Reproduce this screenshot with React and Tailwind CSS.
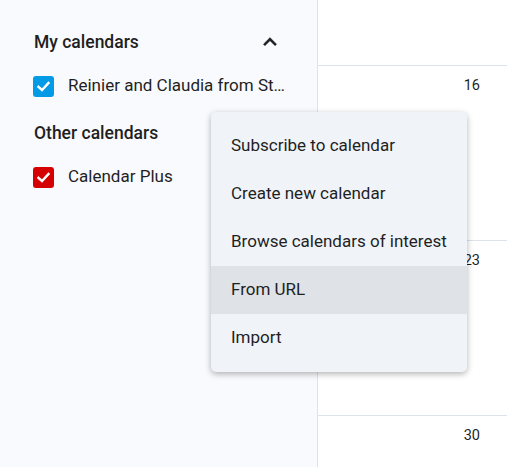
import React from "react";

const font = { fontFamily: "Roboto, 'Noto Sans', Arial, sans-serif" };

function Check({ color }) {
  return (
    <div className={`w-[21px] h-[21px] rounded-[3px] flex items-center justify-center shrink-0 ${color}`}>
      <svg width="15" height="15" viewBox="0 0 15 15">
        <polyline points="2.5,7.8 6,11 12.5,4" fill="none" stroke="white" strokeWidth="2.4" strokeLinecap="square" />
      </svg>
    </div>
  );
}

export default function App() {
  const items = ["Subscribe to calendar", "Create new calendar", "Browse calendars of interest", "From URL", "Import"];
  return (
    <div className="relative flex w-[507px] h-[467px] overflow-hidden bg-white text-[#1f1f1f]" style={font}>
      <div className="w-[318px] shrink-0 h-full bg-[#f8fafd] border-r border-[#dde3ea] pt-[18px] pl-[33px]">
        <div className="h-12 flex items-center justify-between pr-[36px]">
          <span className="ml-px text-[17.5px] font-medium">My calendars</span>
          <svg width="22" height="22" viewBox="0 0 24 24" className="-mt-px">
            <path d="M7.41 15.41L12 10.83l4.59 4.58L18 14l-6-6-6 6z" fill="#1f1f1f" stroke="#1f1f1f" strokeWidth="0.4" transform="translate(12 12) scale(1.2) translate(-12 -12)" />
          </svg>
        </div>
        <div className="h-10 flex items-center gap-[14px]">
          <Check color="bg-[#039be5]" />
          <span className="text-[17px] whitespace-nowrap">Reinier and Claudia from St…</span>
        </div>
        <div className="mt-[3px] h-12 flex items-center">
          <span className="ml-px text-[17.5px] font-medium">Other calendars</span>
        </div>
        <div className="h-10 flex items-center gap-[14px]">
          <Check color="bg-[#d50000]" />
          <span className="text-[17px]">Calendar Plus</span>
        </div>
      </div>
      <div className="flex-1 flex flex-col">
        <div className="h-[65px] shrink-0" />
        {["16", "23", "30"].map((n) => (
          <div key={n} className="h-[175px] shrink-0 border-t border-[#dde3ea] flex justify-end pr-[27px] pt-[10px]">
            <span className="text-[14.5px] font-normal leading-[20px]">{n}</span>
          </div>
        ))}
      </div>
      <div className="absolute left-[211px] top-[112px] w-[256px] py-[10px] bg-[#f0f4f9] rounded-[5px] shadow-[0_2px_6px_rgba(0,0,0,0.3)]">
        {items.map((t) => (
          <div key={t} className={`h-12 flex items-center pl-5 text-[17px] ${t === "From URL" ? "bg-[#dfe3e7]" : ""}`}>
            {t}
          </div>
        ))}
      </div>
    </div>
  );
}
